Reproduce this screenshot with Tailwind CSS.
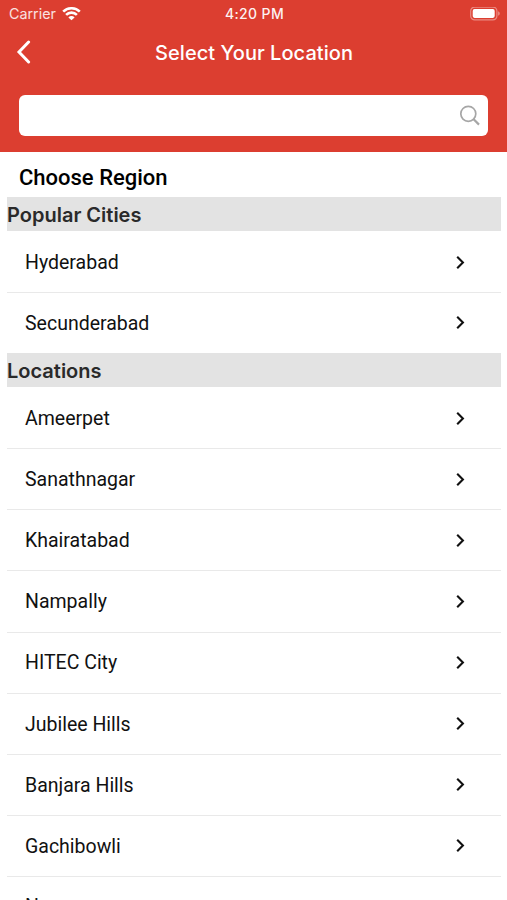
<!DOCTYPE html>
<html lang="en">
<head>
    <meta charset="UTF-8">
    <meta name="viewport" content="width=device-width, initial-scale=1.0">
    <title>Select Your Location</title>
    <script src="https://cdn.jsdelivr.net/npm/@tailwindcss/browser@4"></script>
</head>
<body class="bg-white h-screen overflow-hidden font-['Roboto',sans-serif] text-[#111]">
    <header class="bg-[#dc3e30] h-[152px] text-white font-['Inter',sans-serif]">
        <!-- Status bar -->
        <div class="grid grid-cols-3 items-center h-[27px] pl-[9px] pr-[7px]">
            <div class="flex items-center gap-[6px] text-[14.3px] text-white/85">
                <span>Carrier</span>
                <svg class="w-[19px] h-[14px]" viewBox="0 0 19 14" fill="none" stroke="white" stroke-width="2.6">
                    <path d="M1.2 4.7a11.8 11.8 0 0 1 16.6 0"/>
                    <path d="M4.1 7.9a7.6 7.6 0 0 1 10.8 0"/>
                    <path d="M9.5 13.3 6.4 10.4a4.4 4.4 0 0 1 6.2 0z" fill="white" stroke="none"/>
                </svg>
            </div>
            <div class="text-center text-[14px] font-medium tracking-[0.35px] text-white/95">4:20 PM</div>
            <svg class="justify-self-end w-[31px] h-[14px]" viewBox="0 0 31 14" fill="none">
                <rect x="1.7" y="0.1" width="26.2" height="12.8" rx="4" stroke="white" stroke-opacity=".4" stroke-width="1.2"/>
                <rect x="3.7" y="2.1" width="22" height="8.8" rx="1.8" fill="white"/>
                <path d="M29.2 4.3c2 .8 2 3.6 0 4.4z" fill="white" fill-opacity=".45"/>
            </svg>
        </div>
        <!-- Nav bar -->
        <div class="grid grid-cols-[40px_1fr_40px] items-center h-[50px] px-[1px]">
            <button aria-label="Back" class="pl-[15px]">
                <svg class="w-[16px] h-[24px]" viewBox="0 0 16 24" fill="none" stroke="white" stroke-width="3" stroke-linecap="round" stroke-linejoin="miter">
                    <path d="M12.6 2 3 12 12.6 22"/>
                </svg>
            </button>
            <h1 class="pt-[1px] pl-[1px] text-center text-[20px] font-medium tracking-[0.05px]">Select Your Location</h1>
        </div>
        <div class="px-[19px] pt-[18px]">
            <div class="flex items-center bg-white rounded-[6px] h-[41px] pr-[8px]">
                <input type="text" aria-label="Search" class="flex-1 h-full px-3 text-black outline-none">
                <svg class="w-[21px] h-[21px]" viewBox="0 0 21 21" fill="none" stroke="#a6a6a6" stroke-width="1.7">
                    <circle cx="9.3" cy="8.8" r="7.5"/>
                    <path d="m14.4 14 5.6 5.6" stroke-width="2.2"/>
                </svg>
            </div>
        </div>
    </header>

    <main>
        <h2 class="h-[45px] pt-[5px] pl-[19px] flex items-center text-[22px] font-medium text-black">Choose Region</h2>
        <div id="list" class="ml-[7px] mr-[6px]"></div>
    </main>

    <script>
        const sections = [
            { title: 'Popular Cities', items: ['Hyderabad', 'Secunderabad'] },
            { title: 'Locations', items: ['Ameerpet', 'Sanathnagar', 'Khairatabad', 'Nampally', 'HITEC City', 'Jubilee Hills', 'Banjara Hills', 'Gachibowli', 'Nagaram'] },
        ];

        const row = name => `
            <li class="flex items-center justify-between h-[61.1px] last:h-[60.1px] pl-[18px] pr-[36px] border-b border-[#e9e9e9] last:border-transparent">
                <span class="pt-px text-[19.5px]">${name}</span>
                <svg class="w-[9px] h-[13px]" viewBox="0 0 9 13" fill="none" stroke="#111" stroke-width="2.1">
                    <path d="m1.2 .8 5.7 5.7-5.7 5.7"/>
                </svg>
            </li>`;

        document.getElementById('list').innerHTML = sections.map(s => `
            <section>
                <h3 class="h-[34px] pt-[2px] flex items-center bg-[#e3e3e3] text-[20px] font-semibold text-[#2a2a2a] font-['Inter',sans-serif]">${s.title}</h3>
                <ul class="pt-px">${s.items.map(row).join('')}</ul>
            </section>`).join('');
    </script>
</body>
</html>
